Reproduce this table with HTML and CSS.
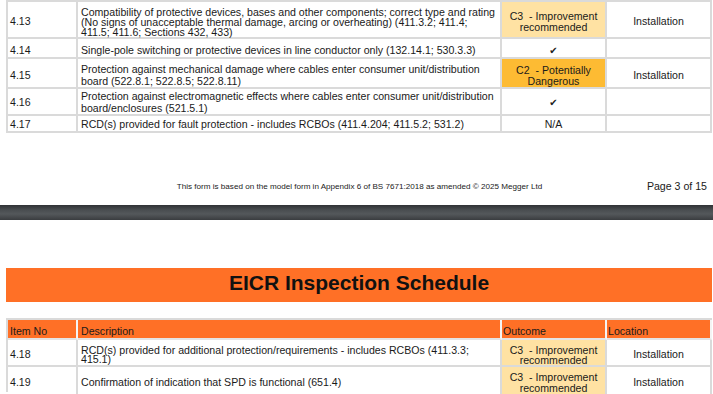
FILE: index.html
```html
<!DOCTYPE html>
<html>
<head>
<meta charset="utf-8">
<title>EICR Inspection Schedule</title>
<link rel="stylesheet" href="styles.css">
</head>
<body>
<div class="sheet sheet-top">
  <div class="tbl">
    <div class="row h37">
      <div class="c c-no">4.13</div>
      <div class="c c-desc lh10"><span>Compatibility of protective devices, bases and other components; correct type and rating</span><span>(No signs of unacceptable thermal damage, arcing or overheating) (411.3.2; 411.4;</span><span>411.5; 411.6; Sections 432, 433)</span></div>
      <div class="c c-out c3"><span>C3&nbsp; - Improvement</span><span>recommended</span></div>
      <div class="c c-loc">Installation</div>
    </div>
    <div class="row h20">
      <div class="c c-no">4.14</div>
      <div class="c c-desc"><span>Single-pole switching or protective devices in line conductor only (132.14.1; 530.3.3)</span></div>
      <div class="c c-out"><span class="tick">✔</span></div>
      <div class="c c-loc"></div>
    </div>
    <div class="row h27">
      <div class="c c-no">4.15</div>
      <div class="c c-desc"><span>Protection against mechanical damage where cables enter consumer unit/distribution</span><span>board (522.8.1; 522.8.5; 522.8.11)</span></div>
      <div class="c c-out c2"><span>C2&nbsp; - Potentially</span><span>Dangerous</span></div>
      <div class="c c-loc">Installation</div>
    </div>
    <div class="row h27">
      <div class="c c-no">4.16</div>
      <div class="c c-desc"><span>Protection against electromagnetic effects where cables enter consumer unit/distribution</span><span>board/enclosures (521.5.1)</span></div>
      <div class="c c-out"><span class="tick">✔</span></div>
      <div class="c c-loc"></div>
    </div>
    <div class="row h20">
      <div class="c c-no">4.17</div>
      <div class="c c-desc"><span>RCD(s) provided for fault protection - includes RCBOs (411.4.204; 411.5.2; 531.2)</span></div>
      <div class="c c-out"><span>N/A</span></div>
      <div class="c c-loc"></div>
    </div>
  </div>
  <div class="foot">
    <div></div>
    <div class="foot-note">This form is based on the model form in Appendix 6 of BS 7671:2018 as amended © 2025 Megger Ltd</div>
    <div class="page-no">Page 3 of 15</div>
  </div>
</div>
<div class="divider"></div>
<div class="sheet sheet-bottom">
  <div class="title">EICR Inspection Schedule</div>
  <div class="tbl tbl-head">
    <div class="row h20 head">
      <div class="c c-no">Item No</div>
      <div class="c c-desc">Description</div>
      <div class="c c-hout">Outcome</div>
      <div class="c c-hloc">Location</div>
    </div>
    <div class="row h27">
      <div class="c c-no">4.18</div>
      <div class="c c-desc lh9"><span>RCD(s) provided for additional protection/requirements - includes RCBOs (411.3.3;</span><span>415.1)</span></div>
      <div class="c c-out c3 lh10"><span>C3&nbsp; - Improvement</span><span>recommended</span></div>
      <div class="c c-loc">Installation</div>
    </div>
    <div class="row h25">
      <div class="c c-no">4.19</div>
      <div class="c c-desc"><span>Confirmation of indication that SPD is functional (651.4)</span></div>
      <div class="c c-out c3"><span>C3&nbsp; - Improvement</span><span>recommended</span></div>
      <div class="c c-loc">Installation</div>
    </div>
  </div>
</div>
</body>
</html>
```

FILE: styles.css
```css
html, body {
  margin: 0;
  padding: 0;
  background: #ffffff;
}
body {
  width: 713px;
  height: 394px;
  overflow: hidden;
  font-family: "Liberation Sans", Arial, sans-serif;
  font-size: 10.6px;
  color: #1a1a1a;
}
* { box-sizing: border-box; }

.sheet-top {
  height: 205px;
}

.tbl {
  margin-left: 6px;
  width: 706px;
  border-left: 2px solid #dadada;
  border-top: 2px solid #dadada;
}
.row {
  display: grid;
  grid-template-columns: 70px 424px 105px 105px;
}
.h20 { height: 20px; }
.h25 { height: 25px; }
.h27 { height: 27px; }
.h37 { height: 37px; }

.c {
  border-right: 2px solid #dadada;
  border-bottom: 2px solid #dadada;
  display: flex;
  flex-direction: column;
  justify-content: center;
  padding-top: 5px;
  line-height: 11.5px;
  white-space: nowrap;
  overflow: visible;
}
.c span { display: block; }
.c-no { padding-left: 2px; }
.c-desc { padding-left: 3px; }
.lh10 { line-height: 10px; }
.lh9 { line-height: 9.5px; }
.c-out {
  align-items: center;
  text-align: center;
  line-height: 11px;
}
.c-out.lh10 { line-height: 10px; }
.c-loc {
  align-items: center;
  text-align: center;
}
.c3 { background: #ffe2a3; }
.c2 { background: #fdbb33; }
.tick {
  font-family: "DejaVu Sans", sans-serif;
  font-size: 10px;
  color: #222;
}

.foot {
  margin-top: 43px;
  height: 20px;
  display: grid;
  grid-template-columns: 1fr auto 1fr;
  align-items: center;
}
.foot-note {
  font-size: 8.1px;
  padding-left: 6px;
  color: #222;
}
.page-no {
  justify-self: end;
  padding-right: 6px;
  font-size: 10.6px;
}

.divider {
  height: 15px;
  background: linear-gradient(#303235, #4a4e51 35%, #54585b 60%, #3a3d40);
}

.sheet-bottom {
  padding-top: 48px;
}
.title {
  margin-left: 6px;
  width: 706px;
  height: 34px;
  background: #ff7026;
  text-align: center;
  font-weight: bold;
  font-size: 21px;
  line-height: 29px;
  padding-bottom: 5px;
  color: #111;
}
.tbl-head {
  margin-top: 16px;
}
.head .c {
  background: #ff7026;
  border-right-color: #f4f4f4;
  border-bottom-color: #e4e4e4;
}
.c-hout { padding-left: 1px; }
.c-hloc { padding-left: 1px; }
```
